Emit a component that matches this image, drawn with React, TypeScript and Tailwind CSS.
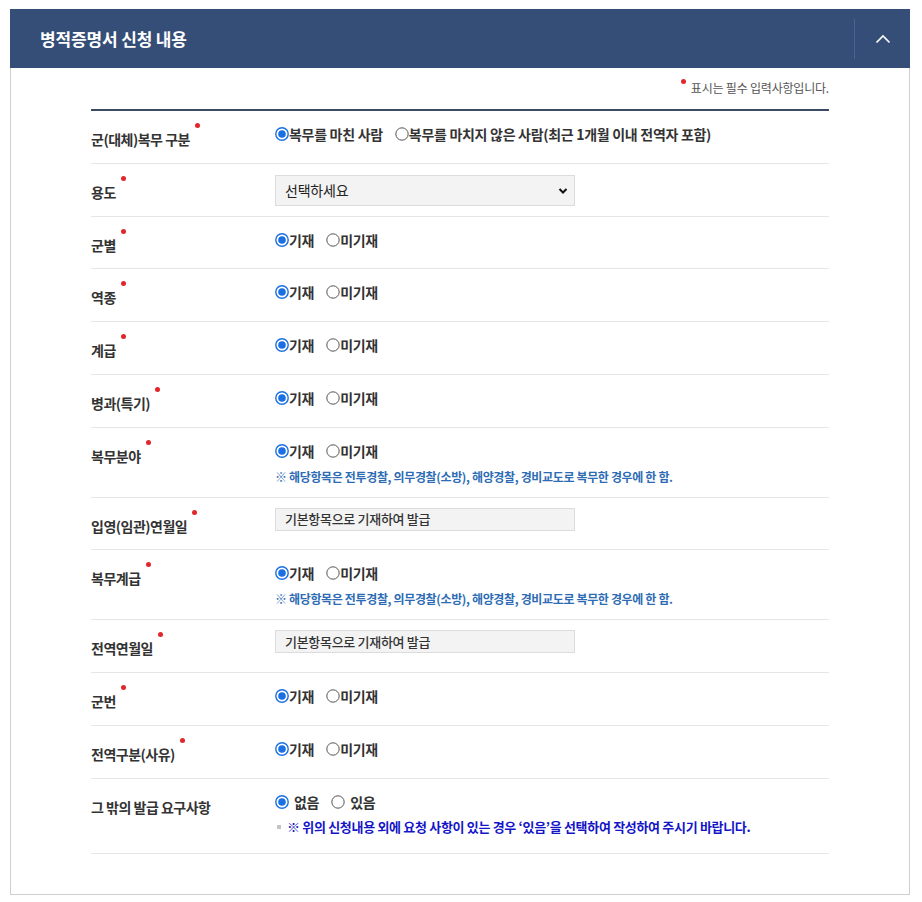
import React from "react";

const font = { fontFamily: '"Noto Sans CJK KR", "Noto Sans", sans-serif' };

function Radio({ checked }: { checked?: boolean }) {
  return (
    <svg width="14" height="14" viewBox="0 0 14 14" className="shrink-0">
      {checked ? (
        <>
          <circle cx="7" cy="7" r="6.2" fill="#fff" stroke="#1a6fe3" strokeWidth="1.4" />
          <circle cx="7" cy="7" r="3.8" fill="#1a6fe3" />
        </>
      ) : (
        <circle cx="7" cy="7" r="6.2" fill="#fff" stroke="#555" strokeWidth="1" />
      )}
    </svg>
  );
}

function RadioItem({ checked, label, gap }: { checked?: boolean; label: string; gap?: boolean }) {
  return (
    <label className={`flex items-center ${gap ? "gap-[5px]" : "gap-0"}`}>
      <Radio checked={checked} />
      <span className="text-[14px] font-bold text-[#333] tracking-[-0.3px] leading-[20px]">{label}</span>
    </label>
  );
}

function Label({ text, req = true }: { text: string; req?: boolean }) {
  return (
    <div className="pt-[17px] leading-[20px]">
      <span className="relative text-[14px] font-bold text-[#333] tracking-[-0.5px] leading-[20px] inline-block">
        {text}
        {req && (
          <span className="absolute left-full ml-[5px] top-[-6px] w-[5px] h-[5px] rounded-full bg-[#e3262b]" />
        )}
      </span>
    </div>
  );
}

function Row({ children, size = "single" }: { children: React.ReactNode; size?: "single" | "note" | "last" }) {
  const h = size === "single" ? "h-[52.75px]" : size === "note" ? "h-[70px]" : "h-[75px]";
  return <div className={`grid grid-cols-[184px_1fr] items-start border-b border-[#e6e6e6] ${h}`}>{children}</div>;
}

function YesNo() {
  return (
    <div className="flex items-center gap-[12px]">
      <RadioItem checked label="기재" />
      <RadioItem label="미기재" />
    </div>
  );
}

function Note() {
  return (
    <div className="mt-[8px] text-[12px] leading-[16px] font-bold text-[#2d6cb4] tracking-[-0.35px]">
      ※ 해당항목은 전투경찰, 의무경찰(소방), 해양경찰, 경비교도로 복무한 경우에 한 함.
    </div>
  );
}

function FixedBox() {
  return (
    <div className="w-[300px] h-[23px] bg-[#f3f3f3] border border-[#dcdcdc] flex items-center px-[9px] text-[13px] leading-[20px] text-[#333] font-medium tracking-[-0.3px]">
      기본항목으로 기재하여 발급
    </div>
  );
}

export default function App() {
  return (
    <div className="bg-white w-[922px] min-h-[902px] pt-[9px] pl-[10px]" style={font}>
      <div className="w-[900px]">
        <div className="h-[59px] bg-[#344e78] flex items-center">
          <h2 className="flex-1 pl-[30px] text-white text-[17px] font-bold tracking-[-0.15px]">병적증명서 신청 내용</h2>
          <div className="w-px h-[40px] bg-[#4b6390]" />
          <button className="w-[55px] h-full flex items-center justify-center">
            <svg width="16" height="10" viewBox="0 0 16 10" fill="none">
              <path d="M1.5 8.5 L8 2 L14.5 8.5" stroke="#fff" strokeWidth="1.6" />
            </svg>
          </button>
        </div>
        <div className="border-x border-b border-[#cfcfcf] px-[80px] pb-[40px]">
          <div className="flex justify-end items-start pt-[11px] h-[41px]">
            <span className="w-[5px] h-[5px] rounded-full bg-[#e3262b] mr-[5px]" />
            <span className="text-[12px] text-[#555] tracking-[-0.2px] leading-[16px] mt-[1px]">표시는 필수 입력사항입니다.</span>
          </div>
          <div className="border-t-2 border-[#3b4b66]">
            <Row>
              <Label text="군(대체)복무 구분" />
              <div className="pt-[13px] flex items-center gap-[12px]">
                <RadioItem checked label="복무를 마친 사람" />
                <RadioItem label="복무를 마치지 않은 사람(최근 1개월 이내 전역자 포함)" />
              </div>
            </Row>
            <Row>
              <Label text="용도" />
              <div className="pt-[11px]">
                <div className="relative w-[300px] h-[31px] bg-[#f3f3f3] border border-[#dcdcdc] flex items-center px-[9px]">
                  <span className="text-[14px] leading-[20px] text-[#222] tracking-[-0.2px]">선택하세요</span>
                  <svg className="absolute right-[6px] top-[11px]" width="10" height="8" viewBox="0 0 10 8" fill="none">
                    <path d="M1.5 2 L5 5.5 L8.5 2" stroke="#111" strokeWidth="2" />
                  </svg>
                </div>
              </div>
            </Row>
            {["군별", "역종", "계급", "병과(특기)"].map((t) => (
              <Row key={t}>
                <Label text={t} />
                <div className="pt-[13px]">
                  <YesNo />
                </div>
              </Row>
            ))}
            <Row size="note">
              <Label text="복무분야" />
              <div className="pt-[13px]">
                <YesNo />
                <Note />
              </div>
            </Row>
            <Row>
              <Label text="입영(임관)연월일" />
              <div className="pt-[10px]">
                <FixedBox />
              </div>
            </Row>
            <Row size="note">
              <Label text="복무계급" />
              <div className="pt-[13px]">
                <YesNo />
                <Note />
              </div>
            </Row>
            <Row>
              <Label text="전역연월일" />
              <div className="pt-[10px]">
                <FixedBox />
              </div>
            </Row>
            {["군번", "전역구분(사유)"].map((t) => (
              <Row key={t}>
                <Label text={t} />
                <div className="pt-[13px]">
                  <YesNo />
                </div>
              </Row>
            ))}
            <Row size="last">
              <Label text="그 밖의 발급 요구사항" req={false} />
              <div className="pt-[13px]">
                <div className="flex items-center gap-[12px]">
                  <RadioItem checked gap label="없음" />
                  <RadioItem gap label="있음" />
                </div>
                <div className="mt-[7px] flex items-center gap-[6px] leading-[16px]">
                  <span className="w-[4px] h-[4px] bg-[#c4c4c4] ml-[2px] mt-[1px]" />
                  <span className="text-[13px] font-bold text-[#1515c8] tracking-[-0.32px]">
                    ※ 위의 신청내용 외에 요청 사항이 있는 경우 ‘있음’을 선택하여 작성하여 주시기 바랍니다.
                  </span>
                </div>
              </div>
            </Row>
          </div>
        </div>
      </div>
    </div>
  );
}
